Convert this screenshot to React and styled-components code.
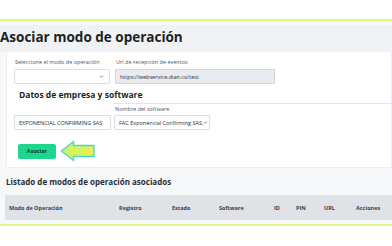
import React from 'react';
import styled, { createGlobalStyle } from 'styled-components';

const Global = createGlobalStyle`
  html, body { margin: 0; padding: 0; background: #ffffff; }
  body { font-family: "Open Sans", "Liberation Sans", sans-serif; overflow: hidden; }
  * { box-sizing: border-box; }
`;

const Page = styled.div`
  width: 392px;
  height: 246px;
  padding-top: 19px;
  background: #ffffff;
`;

const Frame = styled.div`
  border-top: 2px solid #dcfb86;
  border-bottom: 2px solid #dcfb86;
  padding-top: 4px;
  background: #f7f8fa;
`;

const TitleBar = styled.div`
  height: 27px;
  background: #f0f2f5;
  display: flex;
  align-items: center;
  padding-bottom: 3px;
`;

const Title = styled.h1`
  margin: 0;
  font-size: 13.5px;
  line-height: 16px;
  font-weight: 700;
  color: #1c1f24;
`;

const Card = styled.div`
  margin-left: 6px;
  background: #ffffff;
  border: 1px solid #eceef1;
  border-top: none;
  height: 116px;
  padding: 7px 0 0 7px;
`;

const Row = styled.div`
  display: flex;
  gap: 5px;
  align-items: flex-end;
`;

const Field = styled.div`
  display: flex;
  flex-direction: column;
  gap: ${p => p.$gap ?? 3}px;
`;

const Label = styled.span`
  font-size: 5.5px;
  line-height: 7px;
  color: #51565e;
  padding-left: 1px;
`;

const Box = styled.div`
  width: ${p => p.$w}px;
  height: 15px;
  border: 1px solid ${p => (p.$disabled ? '#d3d7dd' : '#dadde2')};
  background: ${p => (p.$disabled ? '#e8ebef' : '#ffffff')};
  border-radius: 1px;
  display: flex;
  align-items: center;
  justify-content: space-between;
  padding: 0 5px 0 4px;
  font-size: 5.5px;
  color: #2b2f35;
  white-space: nowrap;
`;

const Chevron = styled.svg`
  width: 5px;
  height: 5px;
  flex-shrink: 0;
`;

const Section = styled.h2`
  margin: 5px 0 0 5px;
  font-size: 8.5px;
  line-height: 12px;
  font-weight: 700;
  color: #1c1f24;
`;

const SoftwareRow = styled.div`
  display: flex;
  align-items: flex-end;
  margin-top: 2px;
`;

const SoftwarePanel = styled.div`
  flex: 1;
  border-top: 1px solid #e3e5e9;
  padding: 2px 0 0 1px;
  margin-left: 2px;
`;

const Actions = styled.div`
  display: flex;
  align-items: center;
  gap: 4px;
  margin: 10px 0 0 4px;
`;

const Button = styled.button`
  width: 38px;
  height: 15px;
  border: none;
  border-radius: 2px;
  background: #1fd68e;
  color: #0b3d2a;
  font-family: inherit;
  font-size: 5.5px;
  font-weight: 700;
  padding: 0;
`;

const Lower = styled.div`
  padding: 8px 0 4px 5px;
`;

const ListTitle = styled.h3`
  margin: 0 0 7px 1px;
  font-size: 8px;
  line-height: 12px;
  font-weight: 700;
  color: #2a2e35;
`;

const HeadRow = styled.div`
  height: 25px;
  background: #dfe3e8;
  display: grid;
  grid-template-columns: 110px 53px 47px 55px 22px 28px 32px 1fr;
  align-items: center;
  padding-left: 4px;
`;

const Head = styled.span`
  font-size: 5.5px;
  font-weight: 700;
  color: #3a3f47;
`;

const ChevronIcon = () => (
  <Chevron viewBox="0 0 10 10">
    <path d="M2 3.5 L5 6.5 L8 3.5" fill="none" stroke="#555" strokeWidth="1.3" />
  </Chevron>
);

const Arrow = () => (
  <svg width="36" height="22" viewBox="0 0 36 22">
    <defs>
      <linearGradient id="ag" x1="0" y1="0" x2="1" y2="0">
        <stop offset="0" stopColor="#c9f560" />
        <stop offset="0.7" stopColor="#d9f55a" />
        <stop offset="1" stopColor="#f4e65a" />
      </linearGradient>
    </defs>
    <path
      d="M1.5 11 L13.5 1.5 L13.5 5.5 L34 5.5 L34 16.5 L13.5 16.5 L13.5 20.5 Z"
      fill="url(#ag)"
      stroke="#49d6cf"
      strokeWidth="1.4"
      strokeLinejoin="round"
    />
  </svg>
);

const App = () => (
  <Page>
    <Global />
    <Frame>
      <TitleBar>
        <Title>Asociar modo de operación</Title>
      </TitleBar>
      <Card>
        <Row>
          <Field>
            <Label>Seleccione el modo de operación</Label>
            <Box $w={96}>
              <span />
              <ChevronIcon />
            </Box>
          </Field>
          <Field>
            <Label>Url de recepción de eventos</Label>
            <Box $w={160} $disabled>
              https://webservice.dian.co/test
            </Box>
          </Field>
        </Row>
        <Section>Datos de empresa y software</Section>
        <SoftwareRow>
          <Box $w={97}>EXPONENCIAL CONFIRMING SAS</Box>
          <SoftwarePanel>
            <Field $gap={2}>
              <Label>Nombre del software</Label>
              <Box $w={96}>
                FAC Exponencial Confirming SAS.
                <ChevronIcon />
              </Box>
            </Field>
          </SoftwarePanel>
        </SoftwareRow>
        <Actions>
          <Button>Asociar</Button>
          <Arrow />
        </Actions>
      </Card>
      <Lower>
        <ListTitle>Listado de modos de operación asociados</ListTitle>
        <HeadRow>
          <Head>Modo de Operación</Head>
          <Head>Registro</Head>
          <Head>Estado</Head>
          <Head>Software</Head>
          <Head>ID</Head>
          <Head>PIN</Head>
          <Head>URL</Head>
          <Head>Acciones</Head>
        </HeadRow>
      </Lower>
    </Frame>
  </Page>
);

export default App;
